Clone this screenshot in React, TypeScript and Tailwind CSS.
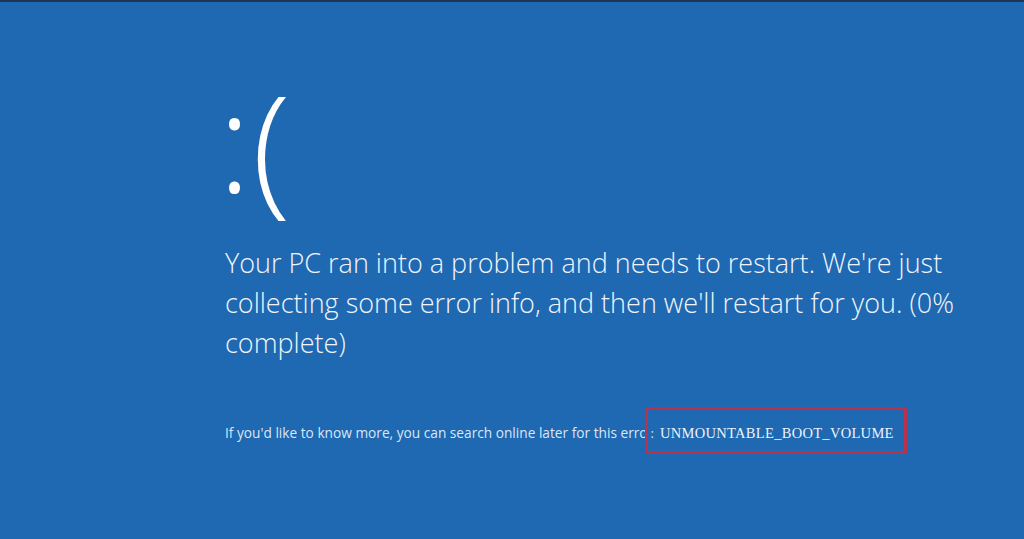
import React from 'react'

export default function App() {
  return (
    <div className="w-[1024px] h-[539px] overflow-hidden bg-[#1f68b2] border-t-2 border-[#1d3556] text-white font-['Open_Sans',sans-serif]">
      <div className="pl-[218px] pt-[62px]">
        <div className="h-[179px] flex items-start font-light text-white">
          <span className="text-[138px] leading-[150px]">:</span>
          <span className="text-[142px] leading-[150px] ml-[1px] mt-[4px]">(</span>
        </div>
        <p className="pl-[7px] w-[760px] text-[27px] leading-[40px] font-light text-[#f0f4fa]">
          Your PC ran into a problem and needs to restart. We're just collecting some error info, and then we'll restart for you. (0% complete)
        </p>
        <div className="mt-[50px] pl-[7px] flex items-center text-[13.7px] text-[#dce6f2]">
          <span>If you'd like to know more, you can search online later for this erro</span>
          <div className="ml-[-3px] mt-[-6px] h-[47px] w-[262px] border-[3px] border-[#b8324e] rounded-[2px] flex items-center pl-[3px]">
            <span className="text-[13px] mt-[6px]">:</span>
            <span className="ml-[6px] mt-[6px] font-['Liberation_Serif',serif] text-[14.5px] tracking-[0.3px] text-[#eef3fa]">UNMOUNTABLE_BOOT_VOLUME</span>
          </div>
        </div>
      </div>
    </div>
  )
}
